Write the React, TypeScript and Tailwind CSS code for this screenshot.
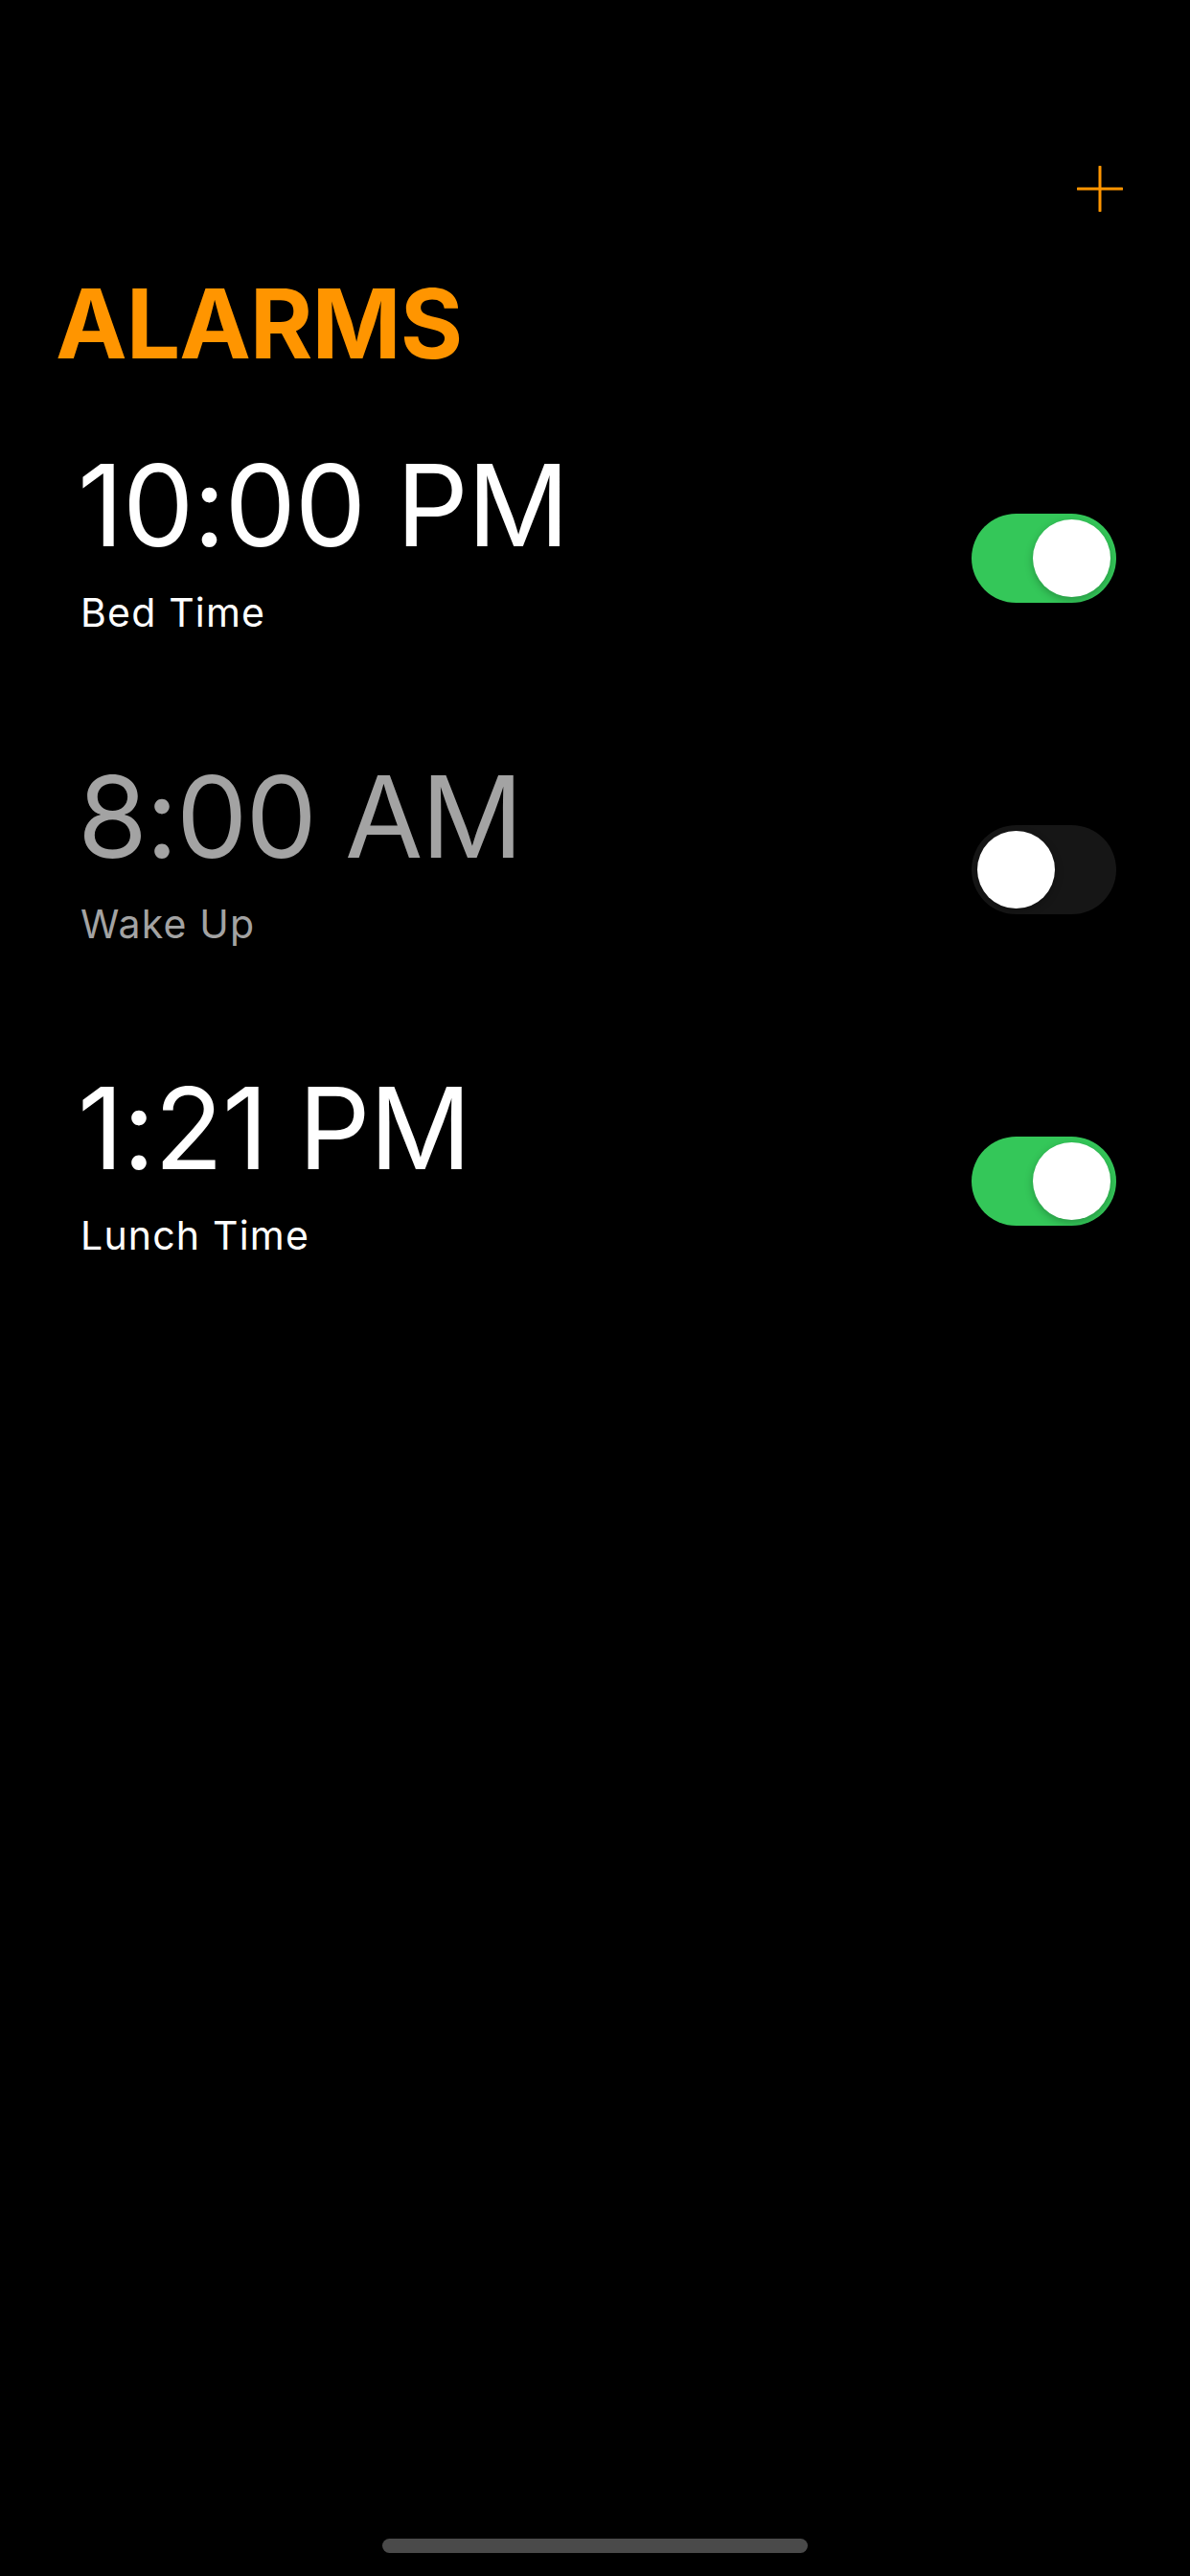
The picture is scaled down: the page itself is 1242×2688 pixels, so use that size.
import React from 'react';

type Alarm = { time: string; label: string; on: boolean };

const alarms: Alarm[] = [
  { time: '10:00 PM', label: 'Bed Time', on: true },
  { time: '8:00 AM', label: 'Wake Up', on: false },
  { time: '1:21 PM', label: 'Lunch Time', on: true },
];

const Toggle: React.FC<{ on: boolean }> = ({ on }) => (
  <div
    className={`mt-[69px] w-[151px] h-[93px] rounded-full p-[6px] flex shrink-0 ${
      on ? 'bg-[#34c759] justify-end' : 'bg-[#161616] justify-start'
    }`}
  >
    <div className="w-[81px] h-[81px] rounded-full bg-white shadow-[0_3px_8px_rgba(0,0,0,0.25)]" />
  </div>
);

export default function App() {
  return (
    <div className="w-[1242px] h-[2688px] bg-black flex flex-col font-['Inter',sans-serif] relative">
      {/* header */}
      <div className="pt-[173px] pr-[70px] flex justify-end">
        <svg width="48" height="48" viewBox="0 0 48 48" className="text-[#ff9500]">
          <path d="M24 1v46M1 24h46" stroke="currentColor" strokeWidth="3" strokeLinecap="round" />
        </svg>
      </div>
      <h1 className="mt-[66px] pl-[58px] text-[100px] leading-[102px] font-bold text-[#ff9500] tracking-[-1px]">
        ALARMS
      </h1>

      {/* alarm list */}
      <div className="mt-[78px] pl-[81px] pr-[77px] flex flex-col gap-[132px]">
        {alarms.map((a) => (
          <div key={a.time} className="flex items-start justify-between">
            <div className={`flex flex-col ${a.on ? 'text-white' : 'text-[#a3a3a3]'}`}>
              <span className={`text-[118px] leading-[120px] font-normal ${a.on ? 'tracking-[-1px]' : 'tracking-[-2px]'}`}>
                {a.time}
              </span>
              <span className="mt-[31px] pl-[3px] text-[41px] leading-[42px] font-normal tracking-[1.2px]">
                {a.label}
              </span>
            </div>
            <Toggle on={a.on} />
          </div>
        ))}
      </div>

      {/* home indicator */}
      <div className="absolute left-[399px] top-[2649px] w-[444px] h-[15px] rounded-full bg-[#4a4a4a]" />
    </div>
  );
}
